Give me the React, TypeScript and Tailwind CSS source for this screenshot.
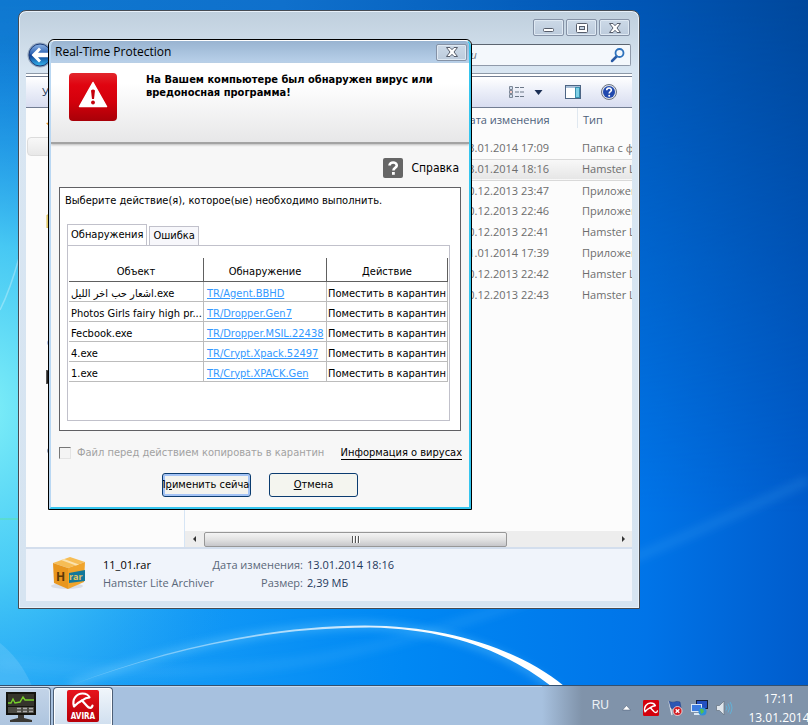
import { useState } from 'react';
import { clsx } from 'clsx';

const FILES = [
  { id: 1, date: '13.01.2014 17:09', type: 'Папка с файлами' },
  { id: 2, date: '13.01.2014 18:16', type: 'Hamster Lite Archiver' },
  { id: 3, date: '30.12.2013 23:47', type: 'Приложение' },
  { id: 4, date: '30.12.2013 22:46', type: 'Приложение' },
  { id: 5, date: '30.12.2013 22:41', type: 'Hamster Lite Archiver' },
  { id: 6, date: '11.01.2014 17:39', type: 'Приложение' },
  { id: 7, date: '30.12.2013 22:42', type: 'Hamster Lite Archiver' },
  { id: 8, date: '30.12.2013 22:43', type: 'Hamster Lite Archiver' },
];

const THREATS = [
  { object: 'اشعار حب اخر الليل.exe', detection: 'TR/Agent.BBHD' },
  { object: 'Photos Girls fairy high pr...', detection: 'TR/Dropper.Gen7' },
  { object: 'Fecbook.exe', detection: 'TR/Dropper.MSIL.22438' },
  { object: '4.exe', detection: 'TR/Crypt.Xpack.52497' },
  { object: '1.exe', detection: 'TR/Crypt.XPACK.Gen' },
];

export default function App() {
  return (
    <div className="flex h-screen w-full flex-col overflow-hidden bg-[#0a7fe4] [font-family:'Open_Sans','Noto_Sans',sans-serif]">
      <main className="relative min-h-0 flex-1 overflow-hidden">
        <Wallpaper />
        <ExplorerWindow />
        <ThreatDialog />
      </main>
      <Taskbar />
    </div>
  );
}

function Wallpaper() {
  return (
    <svg
      className="absolute inset-0 h-full w-full"
      viewBox="0 0 808 686"
      preserveAspectRatio="xMinYMin slice"
      aria-hidden="true"
    >
      <defs>
        <linearGradient id="sky" x1="0" y1="0" x2="1" y2="0">
          <stop offset="0" stopColor="#0f78d0" />
          <stop offset="0.35" stopColor="#1070cc" />
          <stop offset="0.8" stopColor="#0055b4" />
          <stop offset="1" stopColor="#00489c" />
        </linearGradient>
        <linearGradient id="deep" x1="0" y1="0" x2="1" y2="0">
          <stop offset="0" stopColor="#22a8f8" />
          <stop offset="0.5" stopColor="#0088f4" />
          <stop offset="0.8" stopColor="#0074e8" />
          <stop offset="1" stopColor="#005ccc" />
        </linearGradient>
        <linearGradient id="fade" x1="0" y1="0" x2="0" y2="1">
          <stop offset="0" stopColor="#000" />
          <stop offset="0.75" stopColor="#fff" />
        </linearGradient>
        <mask id="lower">
          <rect width="808" height="686" fill="url(#fade)" />
        </mask>
        <radialGradient id="glow" gradientUnits="userSpaceOnUse" cx="0" cy="0" r="1" gradientTransform="translate(-20 410) scale(300 370)">
          <stop offset="0" stopColor="#80f0f8" />
          <stop offset="0.45" stopColor="#4fd2f6" stopOpacity="0.85" />
          <stop offset="1" stopColor="#1f9af0" stopOpacity="0" />
        </radialGradient>
        <linearGradient id="arc" x1="0" y1="0" x2="1" y2="0">
          <stop offset="0" stopColor="#fff" stopOpacity="0.15" />
          <stop offset="0.4" stopColor="#fff" stopOpacity="0.6" />
          <stop offset="0.75" stopColor="#fff" />
        </linearGradient>
        <filter id="soft" x="-10%" y="-30%" width="120%" height="160%">
          <feGaussianBlur stdDeviation="4" />
        </filter>
        <filter id="edge">
          <feGaussianBlur stdDeviation="0.7" />
        </filter>
      </defs>
      <rect width="808" height="686" fill="url(#sky)" />
      <rect width="808" height="686" fill="url(#deep)" mask="url(#lower)" />
      <rect width="808" height="686" fill="url(#glow)" />
      <path d="M0 663C120 674 250 676 350 652C480 625 640 560 808 480" fill="none" stroke="#6cc8ff" strokeOpacity="0.15" strokeWidth="9" filter="url(#soft)" />
      <path d="M0 643C14 654 24 668 32 686H0Z" fill="#fff" fillOpacity="0.12" />
      <path d="M0 310Q10 290 19 258" fill="none" stroke="#fff" strokeOpacity="0.3" strokeWidth="1.5" />
      <path d="M0 519H20" stroke="#5ee39c" strokeOpacity="0.8" />
      <path d="M70 685C170 648 270 627 365 625.500C450 628 515 655 556 690" fill="none" stroke="#7fd4ff" strokeOpacity="0.45" strokeWidth="6" filter="url(#soft)" />
      <path d="M70 685.500C170 647 270 626 365 625.500C450 626 520 650 564 686H551C505 651 450 629 370 627.500C270 627.500 170 649 70 685.500Z" fill="url(#arc)" filter="url(#edge)" />
    </svg>
  );
}

function ExplorerWindow() {
  return (
    <section
      aria-label="Проводник"
      className="absolute top-[10px] left-[18px] flex h-[599px] w-[622px] flex-col rounded-t-lg border border-[#454b53] bg-[#d6e4f1] bg-linear-to-b from-[#bfcfdd] via-[#d9e6f2] via-10% to-[#d6e4f1] px-[7px] pb-[7px] text-[11px] shadow-[inset_0_0_0_1px_#e8f1fa]"
    >
      <div className="flex h-[31px] justify-end gap-0.5 pt-2 pr-0.5">
        <FrameButton label="Свернуть">
          <rect x="3.500" y="7.500" width="10" height="3" rx="1" fill="#fff" stroke="#565d6b" />
        </FrameButton>
        <FrameButton label="Развернуть">
          <rect x="3.500" y="2.500" width="11" height="9" rx="1" fill="#fff" stroke="#565d6b" />
          <rect x="6.500" y="5.500" width="5" height="3" fill="#c5d3e2" stroke="#565d6b" />
        </FrameButton>
        <FrameButton label="Закрыть">
          <Cross />
        </FrameButton>
      </div>

      <div className="flex items-center justify-between pr-px">
        <button type="button" aria-label="Назад" className="ml-px h-[26px] w-[26px]">
          <svg viewBox="0 0 26 26" className="h-[26px] w-[26px]">
            <defs>
              <linearGradient id="back" x1="0" y1="0" x2="0" y2="1">
                <stop offset="0" stopColor="#8fb4e4" />
                <stop offset="0.45" stopColor="#2b62b4" />
                <stop offset="0.5" stopColor="#0c3a90" />
                <stop offset="1" stopColor="#35b8f0" />
              </linearGradient>
            </defs>
            <circle cx="13" cy="13" r="12.500" fill="#93a5bd" />
            <circle cx="13" cy="13" r="11" fill="url(#back)" stroke="#1c3c78" />
            <path d="M4.500 13L12 5.500L14 7.500L11 10.700H22V15.300H11L14 18.500L12 20.500Z" fill="#fff" />
          </svg>
        </button>
        <form className="flex h-[22px] w-[246px] items-center rounded-xs border border-[#8f9aaa] border-t-[#5c6570] bg-[#f4f8fc] pr-1 pl-2.5">
          <input
            type="search"
            aria-label="Поиск"
            placeholder="Поиск: Загрузки"
            className="min-w-0 flex-1 bg-transparent text-[11px] italic outline-none placeholder:text-[#707880]"
          />
          <button type="submit" aria-label="Найти" className="h-4 w-4">
            <svg viewBox="0 0 16 16" className="h-4 w-4" fill="none">
              <path d="M2 14L6.500 9.500" stroke="#2a5aa4" strokeWidth="2.500" strokeLinecap="round" />
              <circle cx="9.500" cy="6" r="4" stroke="#2e72bc" strokeWidth="1.800" />
            </svg>
          </button>
        </form>
      </div>

      <div className="mt-[5px] h-[3px] border-t border-[#8d99a8] bg-white" />
      <div className="flex h-8 items-center border-y border-[#727d92] bg-linear-to-b from-white via-[#eceff9] via-45% to-[#d8ddf0] pr-[15px] pl-4 text-[#1e395b]">
        <button type="button" className="mr-auto">Упорядочить</button>
        <button type="button" aria-label="Изменить представление" className="mr-[9px]">
          <svg viewBox="0 0 17 14" className="h-3.5 w-[17px]">
            <path d="M1.500 1.500h3v3h-3zM1.500 5.500h3v3h-3zM1.500 9.500h3v3h-3z" fill="#fff" stroke="#7c8797" />
            <path d="M2.500 2.500h1v1h-1zM2.500 10.500h1v1h-1z" fill="#3f6fb0" />
            <path d="M2.500 6.500h1v1h-1z" fill="#d03020" />
            <path d="M7 2.500h4M12 2.500h4M7 7h4M12 7h4M7 11.500h4M12 11.500h4" stroke="#6c7888" strokeWidth="1.200" />
          </svg>
        </button>
        <button type="button" aria-label="Другие представления" className="mr-[22px]">
          <svg viewBox="0 0 9 5" className="h-[5px] w-[9px]"><path d="M0.500 0H8.500L4.500 5Z" fill="#1b2f55" /></svg>
        </button>
        <button type="button" aria-label="Область просмотра" className="mr-5">
          <svg viewBox="0 0 16 14" className="h-3.5 w-4">
            <rect x="0.500" y="0.500" width="15" height="13" fill="#fff" stroke="#4d6584" />
            <rect x="1" y="1" width="14" height="2" fill="#a8bfd8" />
            <rect x="10.500" y="2.500" width="4" height="10" fill="#7fd0e6" stroke="#3a8fae" />
          </svg>
        </button>
        <button type="button" aria-label="Справка проводника">
          <svg viewBox="0 0 16 16" className="h-4 w-4">
            <circle cx="8" cy="8" r="7.500" fill="#dfe3ea" stroke="#6c7484" />
            <circle cx="8" cy="8" r="6" fill="#2149ae" />
            <path d="M5.700 6.300C5.700 3.200 10.400 3.300 10.400 6.100C10.400 7.700 8.200 7.700 8.200 9.400" fill="none" stroke="#fff" strokeWidth="1.600" />
            <circle cx="8.200" cy="11.700" r="1" fill="#fff" />
          </svg>
        </button>
      </div>

      <div className="flex min-h-0 flex-1 bg-[#fcfcfc]">
        <nav aria-label="Переходы" className="flex w-[159px] shrink-0 flex-col border-r border-[#d6e5f5] pt-2.5">
          <NavIcon className="mb-[5px]">
            <path d="M0 5L5 4L8 0L11 5L16 6L11 9L8 14Z" fill="#f0a030" />
          </NavIcon>
          <div className="mx-px mb-[58px] h-[19px] rounded-sm border border-[#dcdcdc] bg-linear-to-b from-[#f8f8f8] to-[#e8e8e8]" />
          <NavIcon className="mb-[108px]">
            <path d="M1 1H7L9 3H15V14H1Z" fill="#f3e089" stroke="#d6b94c" />
          </NavIcon>
          <NavIcon className="mb-5">
            <circle cx="8" cy="7" r="6.500" fill="#4a6cc4" />
          </NavIcon>
          <NavIcon className="mb-[60px]">
            <rect x="0.500" y="0.500" width="15" height="13" fill="#222" stroke="#555" />
          </NavIcon>
          <NavIcon>
            <circle cx="8" cy="7" r="6.500" fill="#1d3a74" />
          </NavIcon>
        </nav>

        <div className="flex min-w-0 flex-1 flex-col">
          <div className="min-h-0 flex-1 overflow-hidden">
            <table className="w-full table-fixed border-collapse text-left text-[#6d6d6d]">
              <colgroup>
                <col className="w-[271px]" />
                <col className="w-[121px]" />
                <col />
              </colgroup>
              <thead>
                <tr className="h-[30px] align-top whitespace-nowrap text-[#4c607a]">
                  <th aria-label="Имя" />
                  <th className="p-0 pt-1 pl-1.5 font-normal">Дата изменения</th>
                  <th className="p-0 font-normal">
                    <div className="h-5 overflow-hidden border-l border-[#e0e8f0] pt-1 pl-[5px]">Тип</div>
                  </th>
                </tr>
              </thead>
              <tbody>
                {FILES.map((file) => (
                  <tr
                    key={file.id}
                    className={clsx(
                      'h-[21px] whitespace-nowrap',
                      file.id === 2 && 'border-y border-[#d9d9d9] bg-linear-to-b from-[#f8f8f8] to-[#e6e6e6]',
                    )}
                  >
                    <td />
                    <td className="p-0 pl-1.5">{file.date}</td>
                    <td className="overflow-hidden p-0 pl-[5px]">{file.type}</td>
                  </tr>
                ))}
              </tbody>
            </table>
          </div>

          <div className="flex h-4 items-center bg-[#ededed]">
            <svg viewBox="0 0 19 8" className="h-2 w-[19px] shrink-0"><path d="M11 1V7L8 4Z" fill="#333" /></svg>
            <div className="flex h-[15px] w-[303px] items-center justify-center gap-px rounded-xs border border-[#979797] bg-linear-to-b from-[#f4f4f4] via-[#e2e2e2] via-50% to-[#c6c6ca]">
              <i className="h-[7px] w-0.5 border-l border-[#555] bg-white" />
              <i className="h-[7px] w-0.5 border-l border-[#555] bg-white" />
              <i className="h-[7px] w-0.5 border-l border-[#555] bg-white" />
            </div>
            <svg viewBox="0 0 18 8" className="ml-auto h-2 w-[18px] shrink-0"><path d="M8 1V7L11 4Z" fill="#333" /></svg>
          </div>
        </div>
      </div>

      <footer className="flex h-[54px] shrink-0 border-t-2 border-[#d3deed] bg-[#f0f4fb] pt-[7px] pl-6 leading-[18px] text-[#5a6779]">
        <ArchiveIcon />
        <div className="ml-[17px] w-[111px] shrink-0 whitespace-nowrap">
          <p className="text-black">11_01.rar</p>
          <p>Hamster Lite Archiver</p>
        </div>
        <dl className="grid w-[190px] shrink-0 grid-cols-[89px_1fr] content-start gap-x-1 whitespace-nowrap">
          <dt className="flex justify-end">Дата изменения:</dt>
          <dd className="text-[#1e395b]">13.01.2014 18:16</dd>
          <dt className="flex justify-end">Размер:</dt>
          <dd className="text-[#1e395b]">2,39 МБ</dd>
        </dl>
      </footer>
    </section>
  );
}

function FrameButton({ label, children }: { label: string; children: React.ReactNode }) {
  return (
    <button
      type="button"
      aria-label={label}
      className="flex h-[17px] w-[31px] items-center justify-center rounded-xs border border-[#8592a6] bg-linear-to-b from-[#ccd9e7] to-[#bccbdc] shadow-[inset_0_0_0_1px_#dfe9f3]"
    >
      <svg viewBox="0 0 18 14" className="h-3.5 w-[18px]">{children}</svg>
    </button>
  );
}

function Cross() {
  return (
    <path
      d="M3.500 2.500H7L9 4.700L11 2.500H14.500L11 7L14.500 11.500H11L9 9.300L7 11.500H3.500L7 7Z"
      fill="#fff"
      stroke="#565d6b"
    />
  );
}

function NavIcon({ className, children }: { className?: string; children: React.ReactNode }) {
  return (
    <svg viewBox="0 0 16 14" className={clsx('ml-5 h-3.5 w-4 shrink-0', className)} aria-hidden="true">
      {children}
    </svg>
  );
}

function ArchiveIcon() {
  return (
    <svg viewBox="0 0 36 34" className="h-[34px] w-9 shrink-0" aria-hidden="true">
      <ellipse cx="17" cy="30" rx="16" ry="3" fill="#d9dde6" />
      <path d="M3 7L20 1L35 6L18 12Z" fill="#f6bd55" />
      <path d="M3 7L18 12V33L4 27Z" fill="#e8961e" />
      <path d="M18 12L35 6L34 26L18 33Z" fill="#f0a42c" />
      <path d="M11 4L26 9.500L29 8.500L14 3Z" fill="#fbe2ae" />
      <path d="M19 17L35 14V25L19 27Z" fill="#14789a" />
      <text x="6" y="25" fontSize="12" fontWeight="700" fill="#5b3908">H</text>
      <text x="19" y="24" fontSize="9" fontWeight="700" fill="#e6c560">rar</text>
    </svg>
  );
}

function ThreatDialog() {
  const [tab, setTab] = useState<'found' | 'error'>('found');

  return (
    <section
      role="dialog"
      aria-label="Real-Time Protection"
      className="absolute top-[39px] left-12 flex h-[471px] w-[424px] flex-col rounded-t-md border border-black bg-[#f7f7f7] text-[11px] text-black [font-family:'DejaVu_Sans_Condensed','DejaVu_Sans',sans-serif]"
    >
      <div className="flex min-h-0 flex-1 flex-col overflow-hidden rounded-t-md border-2 border-t border-[#b9d7f2] border-t-white border-r-[#35c5ee] border-b-[#35c5ee]">
        <div className="flex h-[22px] shrink-0 items-center justify-between bg-linear-to-b from-[#99b4d1] to-[#b9d1ea] pr-0.5 pl-1">
          <h1 className="text-xs [font-family:'Open_Sans','Noto_Sans',sans-serif]">Real-Time Protection</h1>
          <FrameButton label="Закрыть окно">
            <Cross />
          </FrameButton>
        </div>

        <header className="flex h-[81px] shrink-0 gap-[29px] border-b-2 border-[#a3a3a3] bg-linear-to-b from-white via-white via-25% to-[#e7e7e8] pt-2.5 pl-[18px] shadow-[0_1px_2px_#bbb]">
          <WarningIcon />
          <p className="leading-[13px] font-bold whitespace-nowrap">
            На Вашем компьютере был обнаружен вирус или
            <br />
            вредоносная программа!
          </p>
        </header>

        <div className="flex min-h-0 flex-1 flex-col px-2 pt-3.5 pb-2.5">
          <a href="#help" className="mr-0.5 flex items-center gap-2 self-end text-xs">
            <svg viewBox="0 0 20 20" className="h-5 w-5">
              <rect width="20" height="20" rx="2" fill="#666" />
              <path d="M6.500 7.500C6.500 3.500 13.800 3.600 13.800 7.400C13.800 9.700 10.400 9.800 10.400 12.500" fill="none" stroke="#fff" strokeWidth="2.600" />
              <rect x="9" y="14" width="2.800" height="2.800" fill="#fff" />
            </svg>
            Справка
          </a>

          <div className="mt-[9px] flex h-[244px] shrink-0 flex-col border border-[#606064] bg-white px-[7px] pt-[5px] pb-[9px]">
            <p className="-ml-0.5 leading-4 whitespace-nowrap">Выберите действие(я), которое(ые) необходимо выполнить.</p>
            <div role="tablist" className="mt-[15px] flex items-end gap-0.5">
              <TabButton active={tab === 'found'} onClick={() => setTab('found')}>
                Обнаружения
              </TabButton>
              <TabButton active={tab === 'error'} onClick={() => setTab('error')}>
                Ошибка
              </TabButton>
            </div>
            <div role="tabpanel" className="mr-[3px] min-h-0 flex-1 border border-[#c1c1cb] px-px pt-3">
              {tab === 'found' && <ThreatTable />}
            </div>
          </div>

          <div className="mt-3.5 flex items-center justify-between">
            <label className="flex items-center gap-1.5 whitespace-nowrap text-[#a2a2a2]">
              <input
                type="checkbox"
                disabled
                className="h-3 w-3 appearance-none border border-[#e4e4e4] border-t-[#777] border-l-[#777] bg-[#f4f4f4]"
              />
              Файл перед действием копировать в карантин
            </label>
            <a href="#info" className="-mr-px border-b border-black leading-3 whitespace-nowrap">
              Информация о вирусах
            </a>
          </div>

          <div className="mt-auto flex justify-center gap-[18px]">
            <button
              type="button"
              className="flex h-6 w-[89px] justify-center overflow-hidden rounded-[3px] border border-[#0b3c70] bg-[#f3f3ee] whitespace-nowrap shadow-[inset_0_0_0_2px_#a3c3f5]"
            >
              <span className="self-center">П<u>р</u>именить сейчас</span>
            </button>
            <button
              type="button"
              className="h-6 w-[89px] rounded-[3px] border border-[#0b3c70] bg-[#f4f5ef]"
            >
              <u>О</u>тмена
            </button>
          </div>
        </div>
      </div>
    </section>
  );
}

function TabButton({
  active,
  onClick,
  children,
}: {
  active: boolean;
  onClick: () => void;
  children: React.ReactNode;
}) {
  return (
    <button
      type="button"
      role="tab"
      aria-selected={active}
      onClick={onClick}
      className={clsx(
        'border border-b-0 border-[#c1c1cb] px-[3px] whitespace-nowrap',
        active ? '-mb-px h-[22px] bg-white' : 'h-[19px] bg-[#f7f7fb]',
      )}
    >
      {children}
    </button>
  );
}

function ThreatTable() {
  return (
    <table className="w-full table-fixed border-separate border-spacing-0">
      <colgroup>
        <col className="w-[135px]" />
        <col className="w-[123px]" />
        <col />
      </colgroup>
      <thead>
        <tr className="h-[22px]">
          {['Объект', 'Обнаружение', 'Действие'].map((title) => (
            <th key={title} className="border-r border-b border-[#606060] p-0 pt-1.5 font-normal">
              {title}
            </th>
          ))}
        </tr>
      </thead>
      <tbody>
        {THREATS.map((threat) => (
          <tr key={threat.detection} className="h-5 leading-[15px] whitespace-nowrap">
            <td className="overflow-hidden border-r border-b border-[#bcbcbc] p-0 pt-1 pl-0.5">{threat.object}</td>
            <td className="overflow-hidden border-r border-b border-[#bcbcbc] p-0 pt-1 pl-[3px]">
              <a href="#threat" className="text-[#3399ff] underline">{threat.detection}</a>
            </td>
            <td className="overflow-hidden border-r border-b border-[#bcbcbc] p-0 pt-1 pl-px">Поместить в карантин</td>
          </tr>
        ))}
      </tbody>
    </table>
  );
}

function WarningIcon() {
  return (
    <svg viewBox="0 0 48 48" className="h-12 w-12 shrink-0" aria-hidden="true">
      <defs>
        <linearGradient id="alarm" x1="0" y1="0" x2="0" y2="1">
          <stop offset="0" stopColor="#e2262c" />
          <stop offset="0.25" stopColor="#e00410" />
          <stop offset="0.6" stopColor="#d3000b" />
          <stop offset="1" stopColor="#a80008" />
        </linearGradient>
      </defs>
      <rect width="48" height="48" rx="4" fill="url(#alarm)" />
      <path d="M24 9.500L37.500 33.500H10.500Z" fill="#fff" stroke="#fff" strokeWidth="1.500" strokeLinejoin="round" />
      <path d="M22 17.500Q24 15.500 26 17.500L25 26H23Z" fill="#c5000b" />
      <circle cx="24" cy="29.500" r="1.900" fill="#c5000b" />
    </svg>
  );
}

function Umbrella() {
  return (
    <g fill="none" stroke="#fff" strokeWidth="2.200" strokeLinecap="round" strokeLinejoin="round">
      <path d="M4 15.500C1.500 8 7 2.500 12.500 2.500C16 2.500 18.500 4 19.500 6.500C17 6.500 14.500 7.500 12 9.500C9 11 6.500 12.500 4 15.500Z" />
      <path d="M12 9.500L17 15C19 17.500 22 17.500 22.500 14.500" />
    </g>
  );
}

function Taskbar() {
  return (
    <footer className="flex h-10 shrink-0 overflow-hidden border-t border-[#33506f] bg-[#a7c1df] shadow-[inset_0_1px_0_#c9dbee]">
      <button
        type="button"
        aria-label="Диспетчер задач"
        className="mt-px flex w-[51px] shrink-0 justify-center rounded-tr-sm border-t border-r border-[#4d5f76] bg-linear-to-b from-[#c3d4e8] to-[#aec5df] pt-1 pr-2 shadow-[inset_-1px_1px_0_#dce8f4]"
      >
        <svg viewBox="0 0 30 32" className="h-8 w-[30px]">
          <rect width="30" height="23" fill="#15140f" />
          <rect x="2" y="2" width="26" height="12" fill="#35342c" />
          <path d="M2 11L5 11L7 7L9 11L14 10L17 5L19 8L28 8" fill="none" stroke="#77d02c" strokeWidth="1.400" />
          <path d="M2 15H28V21H2Z" fill="#4b4a43" />
          <path d="M11 16.500H15M17 16.500H21M23 16.500H27M11 19.500H15M17 19.500H21M23 19.500H27" stroke="#aaa" strokeWidth="1.500" />
          <path d="M12 23H18V26L26 28V30H4V28L12 26Z" fill="#3b3934" />
        </svg>
      </button>
      <button
        type="button"
        aria-label="Avira"
        className="mt-px ml-0.5 flex w-[60px] shrink-0 justify-center rounded-t-sm border border-b-0 border-[#4d5f76] bg-linear-to-b from-[#f1f6fb] to-[#d0dfef] pt-0.5 shadow-[inset_0_0_0_1px_#fff]"
      >
        <svg viewBox="0 0 32 32" className="h-8 w-8">
          <defs>
            <linearGradient id="avira" x1="0" y1="0" x2="0" y2="1">
              <stop offset="0" stopColor="#e6131c" />
              <stop offset="1" stopColor="#b80009" />
            </linearGradient>
          </defs>
          <rect width="32" height="32" rx="2" fill="url(#avira)" />
          <g transform="translate(3 1)">
            <Umbrella />
          </g>
          <text x="16" y="29" textAnchor="middle" fontSize="8" fontWeight="700" fill="#fff" fontFamily="DejaVu Sans Condensed, sans-serif">AVIRA</text>
        </svg>
      </button>

      <div className="ml-auto flex min-w-0 shrink-0 items-center bg-linear-to-r from-[#a7c1df] to-[#8093aa] to-15% pt-1 pl-[50px] text-white">
        <span className="mr-[13px] mb-1.5 text-xs text-[#edf1f5] [font-family:'Liberation_Sans',sans-serif]">RU</span>
        <button type="button" aria-label="Показать скрытые значки" className="mr-3">
          <svg viewBox="0 0 9 6" className="h-1.5 w-[9px]"><path d="M4.500 0.500L8.500 5H0.500Z" fill="#fff" stroke="#44566c" strokeWidth="0.500" /></svg>
        </button>
        <div className="mr-[15px] flex shrink-0 items-center gap-2">
          <svg viewBox="0 0 24 24" className="h-4 w-4" aria-hidden="true">
            <rect width="24" height="24" rx="2" fill="#d4000c" />
            <g transform="translate(-1 2)">
              <Umbrella />
            </g>
          </svg>
          <svg viewBox="0 0 16 16" className="h-4 w-4" aria-hidden="true">
            <path d="M2 1L5 15" stroke="#dfe6ee" strokeWidth="1.300" />
            <path d="M2 1C6 4 9 0 13 2L14 8C10 6 8 10 4 8Z" fill="#2c57b4" stroke="#1d3c80" strokeWidth="0.500" />
            <circle cx="10.500" cy="11" r="4.500" fill="#d01a20" stroke="#fff" strokeWidth="0.700" />
            <path d="M8.700 9.200L12.300 12.800M12.300 9.200L8.700 12.800" stroke="#fff" strokeWidth="1.400" />
          </svg>
          <svg viewBox="0 0 17 16" className="h-4 w-[17px]" aria-hidden="true">
            <rect x="5.500" y="0.500" width="11" height="8" fill="#2450c0" stroke="#111c38" />
            <rect x="0.500" y="4.500" width="10" height="7" fill="#3d7ce0" stroke="#dbe7f4" />
            <path d="M3 14H9" stroke="#dbe7f4" strokeWidth="2" />
            <circle cx="11.500" cy="11.500" r="4" fill="#2f90d8" />
            <path d="M9 9L12 9L13 12L10 14Z" fill="#55c04c" />
          </svg>
          <svg viewBox="0 0 17 16" className="h-4 w-[17px]" fill="none" aria-hidden="true">
            <path d="M0.500 5.500H3.500L8 1V15L3.500 10.500H0.500Z" fill="#dfe5ec" stroke="#6b7887" strokeWidth="0.800" />
            <path d="M10 5.500Q12 8 10 10.500M12 3.500Q15 8 12 12.500M14 2Q18 8 14 14" stroke="#62b2d8" />
          </svg>
        </div>
        <time dateTime="2014-01-13T17:11" className="-mr-0.5 flex w-[62px] shrink-0 flex-col items-center text-xs leading-[19px] whitespace-nowrap">
          <span>17:11</span>
          <span>13.01.2014</span>
        </time>
      </div>
    </footer>
  );
}
